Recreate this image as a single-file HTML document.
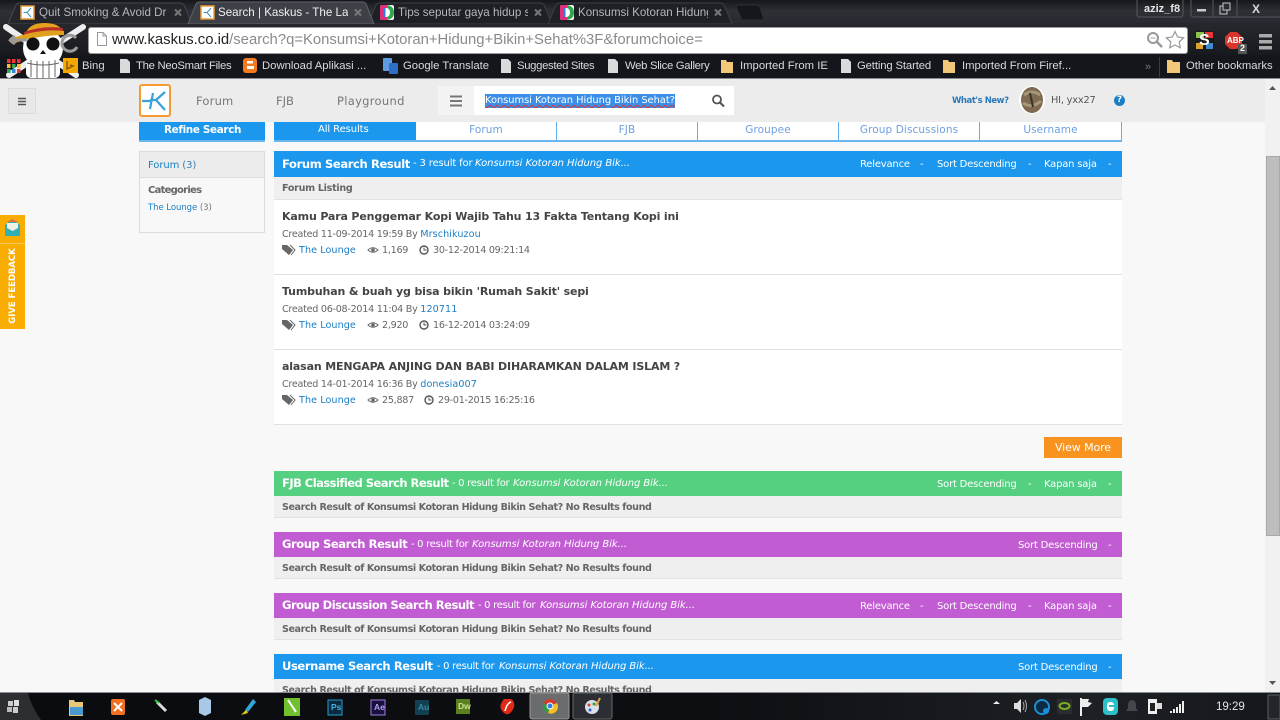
<!DOCTYPE html>
<html><head><meta charset="utf-8"><style>
html,body{margin:0;padding:0;width:1280px;height:720px;overflow:hidden;background:#f8f8f8}
body{position:relative;font-family:"DejaVu Sans","Liberation Sans",sans-serif;font-size:10px;color:#555}
.a,.t{position:absolute}
.t{white-space:nowrap;line-height:14px}
.c{font-family:"Liberation Sans",sans-serif;color:#b4b7bc;font-size:11.6px;overflow:hidden;top:5px}
.tb{font-family:"Liberation Sans",sans-serif;color:#d8dade;font-size:11.3px;top:59px}
.h{font-weight:bold;color:#fff;font-size:11.5px}
.w{color:#fff;font-size:10px;letter-spacing:-.2px}
.r{color:#fff;font-size:10px;letter-spacing:-.3px}
.i{font-style:italic;font-size:10px;letter-spacing:-.07px;color:#fff}
.tt{font-weight:bold;color:#444;font-size:11px;letter-spacing:-.15px}
.g{color:#666;font-size:9.6px;letter-spacing:-.27px}
.l{color:#1b7fc4;font-size:9.6px;letter-spacing:.08px}
.nr{font-weight:bold;color:#666;font-size:9.6px;letter-spacing:-.43px}
.bar{position:absolute;left:274px;width:848px;height:25px}
.sub{position:absolute;left:274px;width:848px;height:22px;background:#efefef;border-bottom:1px solid #e2e2e2;box-sizing:border-box}
.tab{position:absolute;top:122px;height:20px;background:#fff;border-right:1px solid #5cb0ee;border-bottom:2px solid #6ab7f0;box-sizing:border-box;text-align:center;color:#6d9fe0;font-size:10.5px;line-height:17px;letter-spacing:.1px}
.sep{position:absolute;left:274px;width:848px;height:1px;background:#e0e0e0}
.ad{font-family:"Liberation Sans",sans-serif;font-size:8.5px;font-weight:bold;top:700px}
</style></head><body>

<!-- Chrome frame -->
<div class="a" style="left:0;top:0;width:1280px;height:24px;background:linear-gradient(#15171b,#2e3036 45%,#272a30)"></div>
<div class="a" style="left:0;top:23px;width:1280px;height:33px;background:linear-gradient(#26282e,#17191e)"></div>
<div class="a" style="left:0;top:55px;width:1280px;height:24px;background:#14161c"></div>
<div class="a" style="left:0;top:78px;width:1280px;height:1px;background:#8a8c90"></div>

<svg class="a" style="left:0;top:0" width="780" height="24">
<path d="M8 24 L16 5 Q17 3 20 3 H180 Q183 3 184 5 L192 24Z" fill="#24262c" stroke="#45474d"/>
<path d="M368 24 L376 5 Q377 3 380 3 H540 Q543 3 544 5 L552 24Z" fill="#1e2025" stroke="#3c3e44"/>
<path d="M548 24 L556 5 Q557 3 560 3 H720 Q723 3 724 5 L732 24Z" fill="#1e2025" stroke="#3c3e44"/>
<path d="M188 24 L196 4 Q197 2 200 2 H362 Q365 2 366 4 L374 24Z" fill="#3d4047" stroke="#60636a"/>
<path d="M736 7 Q736 5 738 5 H756 Q759 5 760 7 L764 20 H742Z" fill="#15171b" stroke="#2c2e33"/>
<g><rect x="21" y="6" width="13" height="13" fill="#fff" stroke="#e89a3c" stroke-width="1.500"/><path d="M23.500 12.500h4M31 8l-4 4.500 4 4.500" stroke="#3a90c8" fill="none"/></g>
<g><rect x="201" y="6" width="13" height="13" fill="#fff" stroke="#e89a3c" stroke-width="1.500"/><path d="M203.500 12.500h4M211 8l-4 4.500 4 4.500" stroke="#3a90c8" fill="none"/></g>
<g><rect x="380" y="5" width="14" height="15" rx="2" fill="#fff"/><path d="M380 7q0-2 2-2h5v3h-4v9h4v3h-5q-2 0-2-2z" fill="#e02f7b"/><path d="M387 5q7 1 7 7.500t-7 7.500v-3q3-1 3-4.500t-3-4.500z" fill="#2fa84f"/><rect x="383" y="8" width="2.500" height="9" fill="#2a7fdb"/></g>
<g><rect x="560" y="5" width="14" height="15" rx="2" fill="#fff"/><path d="M560 7q0-2 2-2h5v3h-4v9h4v3h-5q-2 0-2-2z" fill="#e02f7b"/><path d="M567 5q7 1 7 7.500t-7 7.500v-3q3-1 3-4.500t-3-4.500z" fill="#2fa84f"/><rect x="563" y="8" width="2.500" height="9" fill="#2a7fdb"/></g>
<g stroke="#777" stroke-width="2"><path d="M175 9.500l6 6M181 9.500l-6 6"/><path d="M355 9.500l6 6M361 9.500l-6 6"/><path d="M535 9.500l6 6M541 9.500l-6 6"/><path d="M715 9.500l6 6M721 9.500l-6 6"/></g>
</svg>
<div class="t c" style="left:39px;width:129px;top:6px">Quit Smoking &amp; Avoid Dr</div>
<div class="t c" style="left:218px;width:130px;top:6px;color:#f0f0f0">Search | Kaskus - The Larg</div>
<div class="t c" style="left:398px;width:130px;top:6px">Tips seputar gaya hidup se</div>
<div class="t c" style="left:578px;width:130px;top:6px">Konsumsi Kotoran Hidung</div>

<!-- window controls -->
<svg class="a" style="left:1130px;top:0" width="150" height="20">
<path d="M7 0V14Q7 17 10 17H50Q53 17 53 14V0" fill="none" stroke="#55575c"/>
<path d="M61 0V14Q61 17 64 17H150" fill="none" stroke="#55575c"/>
<path d="M83 0V17M107 0V17" stroke="#55575c"/>
<rect x="67" y="9" width="9" height="2.500" fill="#c8c8c8"/>
<rect x="90" y="6" width="7" height="8" fill="none" stroke="#c8c8c8"/><rect x="93" y="3" width="7" height="7" fill="#2a2c31" stroke="#c8c8c8"/>
</svg>
<div class="t" style="left:1144px;top:2px;font-family:'Liberation Sans',sans-serif;font-weight:bold;font-size:11px;color:#e6e6e6">aziz_f8</div>
<div class="t" style="left:1252px;top:2px;font-family:'Liberation Sans',sans-serif;font-weight:bold;font-size:12px;color:#d8d8d8">X</div>

<!-- Omnibox -->
<div class="a" style="left:88px;top:27px;width:1098px;height:25px;background:#fff;border:1px solid #9a9a9a;border-radius:3px"></div>
<svg class="a" style="left:96px;top:32px" width="12" height="15"><path d="M1.500 .5H7L10.500 4V13.500H1.500Z" fill="#fff" stroke="#999"/><path d="M7 .5V4H10.500" fill="none" stroke="#999"/></svg>
<div class="t" style="left:112px;top:31px;font-family:'Liberation Sans',sans-serif;font-size:14.850px;line-height:18px;color:#8a8a8a"><span style="color:#222">www.kaskus.co.id</span>/search?q=Konsumsi+Kotoran+Hidung+Bikin+Sehat%3F&amp;forumchoice=</div>
<svg class="a" style="left:1146px;top:31px" width="20" height="20"><circle cx="7" cy="7" r="5" fill="none" stroke="#999" stroke-width="2"/><path d="M11 11l5 5" stroke="#999" stroke-width="2.500"/><path d="M4.500 7h5" stroke="#999"/></svg>
<svg class="a" style="left:1165px;top:30px" width="20" height="20"><path d="M10 1.500l2.600 5.500 6 .8-4.400 4.100 1.100 5.900L10 15l-5.300 2.800 1.100-5.900L1.400 7.800l6-.8z" fill="#fff" stroke="#999" stroke-width="1.200"/></svg>
<svg class="a" style="left:1195px;top:30px" width="85" height="24">
<rect x="0" y="1" width="19" height="19" fill="#1a1a1a"/><rect x="1" y="2" width="8" height="6" fill="#8bc34a"/><rect x="10" y="2" width="8" height="6" fill="#e53935"/><rect x="1" y="13" width="7" height="6" fill="#e0a030"/><rect x="11" y="13" width="7" height="6" fill="#3c8bd0"/>
<path d="M35 2h7l5 5v7l-5 5h-7l-5-5V7z" fill="#d9352a"/>
<rect x="43" y="14" width="9" height="10" fill="#555"/>
<rect x="64" y="4" width="13" height="3.500" fill="#aaa"/><rect x="64" y="10" width="13" height="3.500" fill="#aaa"/><rect x="64" y="16" width="13" height="3.500" fill="#aaa"/>
</svg>
<div class="t" style="left:1199px;top:34px;font-family:'Liberation Sans',sans-serif;font-weight:bold;font-size:16px;color:#fff">S</div>
<div class="t" style="left:1227px;top:34px;font-family:'Liberation Sans',sans-serif;font-weight:bold;font-size:8px;color:#fff">ABP</div>
<div class="t" style="left:1240px;top:41px;font-family:'Liberation Sans',sans-serif;font-weight:bold;font-size:9px;color:#fff">2</div>

<!-- Bookmarks -->
<svg class="a" style="left:0;top:55px" width="1280" height="24">
<g fill="#d9dadc"><path d="M120 4h7l3 3v11h-10z"/><path d="M501 4h7l3 3v11h-10z"/><path d="M608 4h7l3 3v11h-10z"/><path d="M841 4h7l3 3v11h-10z"/></g>
<rect x="243" y="3" width="14" height="15" rx="3" fill="#f4791f"/><rect x="247" y="6" width="6" height="2.500" fill="#fff"/><rect x="247" y="11" width="7" height="3" fill="#fff"/>
<rect x="383" y="3" width="9" height="13" rx="1" fill="#5e9be0"/><rect x="389" y="8" width="9" height="11" rx="1" fill="#2c6fc4"/>
<g fill="#f0c878"><path d="M721 5h5l1 2h6v11h-12z"/><path d="M943 5h5l1 2h6v11h-12z"/><path d="M1167 5h5l1 2h7v11h-13z"/></g>
<rect x="1159" y="2" width="1" height="20" fill="#3a3c42"/>
<text x="1145" y="15" fill="#777" font-size="11" font-family="Liberation Sans">»</text>
</svg>
<div class="t tb" style="left:82px">Bing</div>
<div class="t tb" style="left:136px;letter-spacing:-.28px">The NeoSmart Files</div>
<div class="t tb" style="left:262px">Download Aplikasi ...</div>
<div class="t tb" style="left:403px">Google Translate</div>
<div class="t tb" style="left:517px;letter-spacing:-.33px">Suggested Sites</div>
<div class="t tb" style="left:625px;letter-spacing:-.3px">Web Slice Gallery</div>
<div class="t tb" style="left:740px">Imported From IE</div>
<div class="t tb" style="left:857px;letter-spacing:-.13px">Getting Started</div>
<div class="t tb" style="left:962px">Imported From Firef...</div>
<div class="t tb" style="left:1186px">Other bookmarks</div>

<!-- Skull logo -->
<svg class="a" style="left:0;top:20px" width="90" height="59">
<g stroke="#eee" stroke-width="6" stroke-linecap="round"><path d="M6 7 L76 55M83 7 L9 55"/></g>
<circle cx="43" cy="28" r="20" fill="#fff"/>
<rect x="26" y="38" width="34" height="20" rx="5" fill="#fff"/>
<path d="M25 17 Q27 3 44 3 Q61 3 63 13Z" fill="#e6a21c"/>
<path d="M24 12 Q44 5 63 8 L63 13 Q44 12 25 18Z" fill="#b8302a"/>
<path d="M8 20 Q38 8 64 11 L64 15 Q38 15 12 24Z" fill="#e0a21c"/>
<ellipse cx="33" cy="24" rx="6.500" ry="6.500" fill="#111"/><ellipse cx="53" cy="24" rx="6.500" ry="6.500" fill="#111"/>
<path d="M43 30l-3 4h6z" fill="#111"/>
<path d="M27 43Q43 47 59 43M31 40V57M37 41V58M43 41V58M49 41V58M55 40V57" stroke="#666" stroke-width="1" fill="none"/>
<g><rect x="7" y="39" width="3.500" height="4" fill="#e33"/><rect x="12" y="39" width="3.500" height="4" fill="#e33"/><rect x="17" y="39" width="3.500" height="4" fill="#e33"/><rect x="7" y="44" width="3.500" height="4" fill="#fb3"/><rect x="12" y="44" width="3.500" height="4" fill="#3a5"/><rect x="17" y="44" width="3.500" height="4" fill="#fb3"/><rect x="7" y="49" width="3.500" height="4" fill="#3a5"/><rect x="12" y="49" width="3.500" height="4" fill="#38d"/><rect x="17" y="49" width="3.500" height="4" fill="#e33"/></g>
<path d="M10 20H27M10 20l5-4M10 20l5 4" stroke="#9a9a9a" stroke-width="3" fill="none"/>
<path d="M76 18a8 8 0 1 0 1 9" stroke="#9a9a9a" stroke-width="3" fill="none"/>
<rect x="63" y="38" width="15" height="15" fill="#f5a800"/>
<path d="M67 41v8l6-3-3-1" stroke="#8a5a00" stroke-width="1.500" fill="none"/>
</svg>

<!-- Nav -->
<div class="a" style="left:0;top:79px;width:1265px;height:43px;background:#ececec"></div>
<div class="a" style="left:8px;top:88px;width:28px;height:26px;background:#e8e8e8;border:1px solid #dcdcdc;box-sizing:border-box"></div>
<svg class="a" style="left:17px;top:97px" width="10" height="9"><path d="M1 1.500h8M1 4.500h8M1 7.500h8" stroke="#555" stroke-width="1.500"/></svg>
<div class="a" style="left:139px;top:84px;width:32px;height:33px;background:#fff;border:2px solid #f59b32;border-radius:3px;box-sizing:border-box"></div>
<svg class="a" style="left:141px;top:87px" width="28" height="28"><path d="M1 14H9M12 6 L9 22M24 5 L15 13 L24 23M15 13H9" fill="none" stroke="#3aa0dc" stroke-width="2.200"/></svg>
<div class="t" style="left:196px;top:94px;font-size:11.500px;color:#777;letter-spacing:.2px">Forum</div>
<div class="t" style="left:276px;top:94px;font-size:11.500px;color:#777">FJB</div>
<div class="t" style="left:337px;top:94px;font-size:11.500px;color:#777;letter-spacing:.3px">Playground</div>
<div class="a" style="left:438px;top:86px;width:296px;height:29px;background:#fff"></div>
<div class="a" style="left:438px;top:86px;width:36px;height:29px;background:#f3f3f3"></div>
<svg class="a" style="left:449px;top:95px" width="14" height="12"><path d="M1 1.500h12M1 6h12M1 10.500h12" stroke="#777" stroke-width="2"/></svg>
<div class="a" style="left:485px;top:94px;width:190px;height:14px;background:#3b8fe8"></div>
<div class="t" style="left:485px;top:94px;font-size:9.900px;color:#fff;letter-spacing:-.04px;width:190px;overflow:hidden;text-decoration:underline wavy #d33 1px">Konsumsi Kotoran Hidung Bikin Sehat?</div>
<svg class="a" style="left:711px;top:94px" width="14" height="14"><circle cx="6" cy="5.500" r="4" fill="none" stroke="#555" stroke-width="1.800"/><path d="M9 8.500l4 4" stroke="#555" stroke-width="2.200"/></svg>
<div class="t" style="left:952px;top:94px;font-size:8.500px;font-weight:bold;color:#2b78b8;letter-spacing:-.45px">What's New?</div>
<svg class="a" style="left:1018px;top:85px" width="28" height="30"><ellipse cx="14" cy="15" rx="13" ry="14" fill="#fff"/><ellipse cx="14" cy="15" rx="11" ry="13" fill="#7d6a50"/><path d="M6 10q8-6 16 0M5 18q9 6 18-2" stroke="#a89878" stroke-width="3" fill="none"/><path d="M12 8l3 14" stroke="#3c3228" stroke-width="2"/></svg>
<div class="t" style="left:1051px;top:94px;font-size:9.800px;color:#555;letter-spacing:-.2px">HI, yxx27</div>
<div class="a" style="left:1114px;top:95px;width:11px;height:11px;border-radius:50%;background:#1b7fc4;color:#fff;font-size:9px;font-weight:bold;line-height:11px;text-align:center">?</div>

<!-- Sidebar -->
<div class="a" style="left:139px;top:122px;width:126px;height:20px;background:#1b98ee;border-bottom:2px solid #6ab7f0;box-sizing:border-box"></div>
<div class="t" style="left:164px;top:123px;font-size:10.400px;font-weight:bold;color:#fff;letter-spacing:-.33px">Refine Search</div>
<div class="a" style="left:139px;top:151px;width:126px;height:82px;border:1px solid #dcdcdc;box-sizing:border-box;background:#f8f8f8"></div>
<div class="a" style="left:140px;top:152px;width:124px;height:25px;background:#ececec;border-bottom:1px solid #dcdcdc"></div>
<div class="t" style="left:148px;top:159px;font-size:10px;color:#1b7fc4;letter-spacing:-.1px">Forum <span style="color:#3a7fb5">(3)</span></div>
<div class="t" style="left:148px;top:184px;font-size:10px;font-weight:bold;color:#666;letter-spacing:-.75px">Categories</div>
<div class="t" style="left:148px;top:201px;font-size:8.500px;color:#1b7fc4;letter-spacing:-.05px">The Lounge <span style="color:#777">(3)</span></div>

<!-- Tabs -->
<div class="a" style="left:274px;top:122px;width:142px;height:20px;background:#1b98ee;border-bottom:2px solid #6ab7f0;box-sizing:border-box"></div>
<div class="t" style="left:318px;top:123px;font-size:10px;color:#fff;letter-spacing:-.1px">All Results</div>
<div class="tab" style="left:416px;width:141px">Forum</div>
<div class="tab" style="left:557px;width:141px">FJB</div>
<div class="tab" style="left:698px;width:141px">Groupee</div>
<div class="tab" style="left:839px;width:141px">Group Discussions</div>
<div class="tab" style="left:980px;width:142px;border-right:1px solid #5cb0ee">Username</div>

<!-- Forum result -->
<div class="bar" style="top:151px;height:26px;background:#1b98ee"></div>
<div class="t h" style="left:282px;top:157px;letter-spacing:-.36px">Forum Search Result</div>
<div class="t r" style="left:413px;top:157px;letter-spacing:-.15px">- 3 result for</div><div class="t i" style="left:475px;top:157px">Konsumsi Kotoran Hidung Bik...</div>
<div class="t w" style="left:860px;top:158px">Relevance</div><div class="t w" style="left:920px;top:158px">-</div>
<div class="t w" style="left:937px;top:158px">Sort Descending</div><div class="t w" style="left:1028px;top:158px">-</div>
<div class="t w" style="left:1044px;top:158px">Kapan saja</div><div class="t w" style="left:1108px;top:158px">-</div>
<div class="sub" style="top:177px;height:23px"></div>
<div class="t" style="left:282px;top:182px;font-weight:bold;color:#666;font-size:9.600px;letter-spacing:-.3px">Forum Listing</div>
<div class="a" style="left:274px;top:200px;width:848px;height:225px;background:#fff"></div>
<div class="sep" style="top:274px"></div><div class="sep" style="top:349px"></div><div class="sep" style="top:424px"></div>

<div class="t tt" style="left:282px;top:210px">Kamu Para Penggemar Kopi Wajib Tahu 13 Fakta Tentang Kopi ini</div>
<div class="t g" style="left:282px;top:228px">Created 11-09-2014 19:59 By <span class="l">Mrschikuzou</span></div>
<div class="t l" style="left:299px;top:244px">The Lounge</div><div class="t g" style="left:382px;top:244px">1,169</div><div class="t g" style="left:433px;top:244px">30-12-2014 09:21:14</div>

<div class="t tt" style="left:282px;top:285px">Tumbuhan &amp; buah yg bisa bikin 'Rumah Sakit' sepi</div>
<div class="t g" style="left:282px;top:303px">Created 06-08-2014 11:04 By <span class="l">120711</span></div>
<div class="t l" style="left:299px;top:319px">The Lounge</div><div class="t g" style="left:382px;top:319px">2,920</div><div class="t g" style="left:433px;top:319px">16-12-2014 03:24:09</div>

<div class="t tt" style="left:282px;top:360px">alasan MENGAPA ANJING DAN BABI DIHARAMKAN DALAM ISLAM ?</div>
<div class="t g" style="left:282px;top:378px">Created 14-01-2014 16:36 By <span class="l">donesia007</span></div>
<div class="t l" style="left:299px;top:394px">The Lounge</div><div class="t g" style="left:382px;top:394px">25,887</div><div class="t g" style="left:438px;top:394px">29-01-2015 16:25:16</div>

<svg class="a" style="left:282px;top:243px" width="160" height="165" fill="#666">
<g><path d="M0 2h5l6 5-4 5-7-6z"/><path d="M8 2l5 5-4 5" fill="none" stroke="#666"/><path d="M86 7q5-4.500 10 0q-5 4.500-10 0z" fill="none" stroke="#666"/><circle cx="91" cy="7" r="1.800"/><circle cx="142" cy="7" r="4" fill="none" stroke="#555" stroke-width="1.400"/><path d="M142 4.500V7h2.500" stroke="#555" fill="none"/></g>
<g transform="translate(0,75)"><path d="M0 2h5l6 5-4 5-7-6z"/><path d="M8 2l5 5-4 5" fill="none" stroke="#666"/><path d="M86 7q5-4.500 10 0q-5 4.500-10 0z" fill="none" stroke="#666"/><circle cx="91" cy="7" r="1.800"/><circle cx="142" cy="7" r="4" fill="none" stroke="#555" stroke-width="1.400"/><path d="M142 4.500V7h2.500" stroke="#555" fill="none"/></g>
<g transform="translate(0,150)"><path d="M0 2h5l6 5-4 5-7-6z"/><path d="M8 2l5 5-4 5" fill="none" stroke="#666"/><path d="M86 7q5-4.500 10 0q-5 4.500-10 0z" fill="none" stroke="#666"/><circle cx="91" cy="7" r="1.800"/><circle cx="147" cy="7" r="4" fill="none" stroke="#555" stroke-width="1.400"/><path d="M147 4.500V7h2.500" stroke="#555" fill="none"/></g>
</svg>

<div class="a" style="left:1044px;top:437px;width:78px;height:21px;background:#f7931e;color:#fff;font-size:11px;line-height:22px;text-align:center;letter-spacing:-.1px">View More</div>

<!-- FJB -->
<div class="bar" style="top:471px;background:#55cf80"></div>
<div class="t h" style="left:282px;top:476px;letter-spacing:-.53px">FJB Classified Search Result</div>
<div class="t r" style="left:452px;top:477px">- 0 result for</div><div class="t i" style="left:513px;top:477px">Konsumsi Kotoran Hidung Bik...</div>
<div class="t w" style="left:937px;top:478px">Sort Descending</div><div class="t w" style="left:1028px;top:478px">-</div>
<div class="t w" style="left:1044px;top:478px">Kapan saja</div><div class="t w" style="left:1108px;top:478px">-</div>
<div class="sub" style="top:496px"></div>
<div class="t nr" style="left:282px;top:501px">Search Result of Konsumsi Kotoran Hidung Bikin Sehat? No Results found</div>

<!-- Group -->
<div class="bar" style="top:532px;background:#c25cd2"></div>
<div class="t h" style="left:282px;top:537px;letter-spacing:-.41px">Group Search Result</div>
<div class="t r" style="left:411px;top:538px">- 0 result for</div><div class="t i" style="left:472px;top:538px">Konsumsi Kotoran Hidung Bik...</div>
<div class="t w" style="left:1018px;top:539px">Sort Descending</div><div class="t w" style="left:1108px;top:539px">-</div>
<div class="sub" style="top:557px"></div>
<div class="t nr" style="left:282px;top:562px">Search Result of Konsumsi Kotoran Hidung Bikin Sehat? No Results found</div>

<!-- Group discussion -->
<div class="bar" style="top:593px;background:#c25cd2"></div>
<div class="t h" style="left:282px;top:598px;letter-spacing:-.47px">Group Discussion Search Result</div>
<div class="t r" style="left:478px;top:599px">- 0 result for</div><div class="t i" style="left:540px;top:599px">Konsumsi Kotoran Hidung Bik...</div>
<div class="t w" style="left:860px;top:600px">Relevance</div><div class="t w" style="left:920px;top:600px">-</div>
<div class="t w" style="left:937px;top:600px">Sort Descending</div><div class="t w" style="left:1028px;top:600px">-</div>
<div class="t w" style="left:1044px;top:600px">Kapan saja</div><div class="t w" style="left:1108px;top:600px">-</div>
<div class="sub" style="top:618px"></div>
<div class="t nr" style="left:282px;top:623px">Search Result of Konsumsi Kotoran Hidung Bikin Sehat? No Results found</div>

<!-- Username -->
<div class="bar" style="top:654px;background:#1b98ee"></div>
<div class="t h" style="left:282px;top:659px;letter-spacing:-.38px">Username Search Result</div>
<div class="t r" style="left:437px;top:660px">- 0 result for</div><div class="t i" style="left:499px;top:660px">Konsumsi Kotoran Hidung Bik...</div>
<div class="t w" style="left:1018px;top:661px">Sort Descending</div><div class="t w" style="left:1108px;top:661px">-</div>
<div class="sub" style="top:679px;height:14px;border:0"></div>
<div class="t nr" style="left:282px;top:684px">Search Result of Konsumsi Kotoran Hidung Bikin Sehat? No Results found</div>

<!-- Feedback -->
<div class="a" style="left:0;top:215px;width:25px;height:114px;background:#f9ad00"></div>
<div class="a" style="left:0;top:243px;width:25px;height:1px;background:#fbc95a"></div>
<svg class="a" style="left:4px;top:218px" width="17" height="20"><path d="M1 7L8.500 1 16 7V18H1Z" fill="#2fb0b8"/><path d="M3 5h11v5l-5.500 3L3 10z" fill="#f5f0e6"/><path d="M3 4h11l-5.500-3z" fill="#e8703a"/></svg>
<div class="t" style="left:-25px;top:279px;width:76px;text-align:center;transform:rotate(-90deg);font-size:8.600px;font-weight:bold;color:#fff;letter-spacing:-.1px">GIVE FEEDBACK</div>

<!-- Scrollbar -->
<div class="a" style="left:1265px;top:79px;width:15px;height:613px;background:#f1f1f1"></div>
<div class="a" style="left:1266px;top:156px;width:14px;height:380px;background:#bdbdbd;border:1px solid #a8a8a8;box-sizing:border-box"></div>
<svg class="a" style="left:1265px;top:79px" width="15" height="613"><path d="M4 11l3.500-4 3.500 4z" fill="#555"/><path d="M4 602l3.500 4 3.500-4z" fill="#555"/></svg>

<!-- Taskbar -->
<div class="a" style="left:0;top:692px;width:1280px;height:28px;background:linear-gradient(90deg,#0a0c10 0,#0c0e12 55%,#1d2024 85%,#14171b 100%);border-top:1px solid #8c8e90;box-sizing:border-box"></div>
<svg class="a" style="left:0;top:692px" width="660" height="28">
<path d="M0 1H28Q31 14 41 28H0Z" fill="#2c2e32"/>
<rect x="8" y="9" width="5" height="5" fill="#ccc"/><rect x="14" y="8" width="5" height="6" fill="#ddd"/><rect x="7" y="15" width="5" height="5" fill="#bbb"/><rect x="13" y="15" width="5" height="6" fill="#ccc"/>
<path d="M69 8h5l1 2h8v14h-14z" fill="#e8c878"/><rect x="70" y="15" width="13" height="8" fill="#4a9ad0"/>
<rect x="111" y="7" width="14" height="16" rx="2" fill="#f07020"/><path d="M114 11l8 8M122 11l-8 8" stroke="#fff" stroke-width="2"/>
<path d="M157 10l9 9" stroke="#ddd" stroke-width="3"/><path d="M155 8l4 3" stroke="#3c4" stroke-width="2"/>
<path d="M199 8l6-3 6 3v13l-6 3-6-3z" fill="#a8c8e8"/>
<path d="M245 18l8-11 3 3-8 10z" fill="#30a8d8"/><path d="M241 23l5-5 2 3z" fill="#e8d010"/>
<rect x="284" y="6" width="16" height="18" fill="#70c030"/><path d="M288 8l8 12" stroke="#fff" stroke-width="2"/>
<rect x="328" y="8" width="14" height="15" fill="#0c2a3e" stroke="#2a9ad0"/>
<rect x="371" y="8" width="14" height="15" fill="#1a1040" stroke="#a080e0"/>
<rect x="415" y="8" width="14" height="15" fill="#124050"/>
<rect x="456" y="7" width="14" height="15" fill="#5a8020"/>
<path d="M504 7h6q3 0 4 4t-2 8-6 3-5-5 3-10z" fill="#e02a18"/><path d="M505 19q2-8 6-9" stroke="#fff" stroke-width="1.500" fill="none"/>
<rect x="530" y="1" width="39" height="26" rx="2" fill="#6a6c6e" stroke="#999"/>
<circle cx="550" cy="14" r="7" fill="#d8382c"/><path d="M550 14L557 11A7 7 0 0 1 548 21Z" fill="#f4c020"/><path d="M550 14L548 21A7 7 0 0 1 543.500 11Z" fill="#2f9a48"/><circle cx="550" cy="14" r="3" fill="#3a7fd8" stroke="#fff"/>
<rect x="573" y="1" width="39" height="26" rx="2" fill="#2b2e32" stroke="#666"/>
<circle cx="592" cy="15" r="7" fill="#d8e0ea"/><circle cx="589" cy="13" r="1.500" fill="#e04030"/><circle cx="594" cy="12" r="1.500" fill="#30a040"/><circle cx="590" cy="18" r="1.500" fill="#3060d0"/><path d="M596 14l4-8" stroke="#e0a040" stroke-width="2"/>
</svg>
<div class="t ad" style="left:331px;color:#40b0e8">Ps</div>
<div class="t ad" style="left:374px;color:#b8a0f0">Ae</div>
<div class="t ad" style="left:418px;color:#3a8aa0">Au</div>
<div class="t ad" style="left:458px;top:699px;color:#d0e090">Dw</div>

<svg class="a" style="left:990px;top:693px" width="290" height="27">
<path d="M3 11l3.500-3 3.500 3z" fill="#eee"/>
<path d="M24 10h3l4-4v14l-4-4h-3z" fill="#ddd"/><path d="M33 9q2 4 0 8M35 7q3 6 0 12" stroke="#aaa" fill="none"/>
<circle cx="52" cy="14" r="7" fill="#0c2a40" stroke="#1a90d8" stroke-width="2"/><circle cx="56" cy="18" r="3" fill="#1a90d8"/>
<rect x="67" y="6" width="15" height="15" fill="#2a2c2e"/><ellipse cx="74.500" cy="13" rx="5" ry="3" fill="none" stroke="#7ab020" stroke-width="2"/>
<path d="M91 5v18" stroke="#eee" stroke-width="2"/><path d="M92 6h7l-1 3 4 1-4 4h-6z" fill="#eee"/>
<rect x="113" y="5" width="15" height="17" rx="4" fill="#2ec0c8"/><rect x="117" y="9" width="7" height="9" rx="3" fill="#fff"/><rect x="119" y="12" width="5" height="2" fill="#2ec0c8"/>
<path d="M136 18h12l-2-3v-4q-1-4-4-4t-4 4v4z" fill="#44464a"/>
<rect x="158" y="6" width="9" height="15" fill="#eee"/><path d="M167 10h5v6h-5z" fill="#ddd"/><rect x="160" y="10" width="5" height="8" fill="#222"/>
<g fill="#eee"><rect x="180" y="18" width="2" height="2"/><rect x="183" y="16" width="2" height="4"/><rect x="186" y="14" width="2" height="6"/><rect x="189" y="11" width="2" height="9"/><rect x="192" y="8" width="2" height="12"/></g>
<rect x="278" y="2" width="12" height="24" fill="#22262a" stroke="#5a5e62"/>
</svg>
<div class="t" style="left:1216px;top:700px;font-family:'Liberation Sans',sans-serif;font-size:11.500px;color:#e4e4e4">19:29</div>

</body></html>
